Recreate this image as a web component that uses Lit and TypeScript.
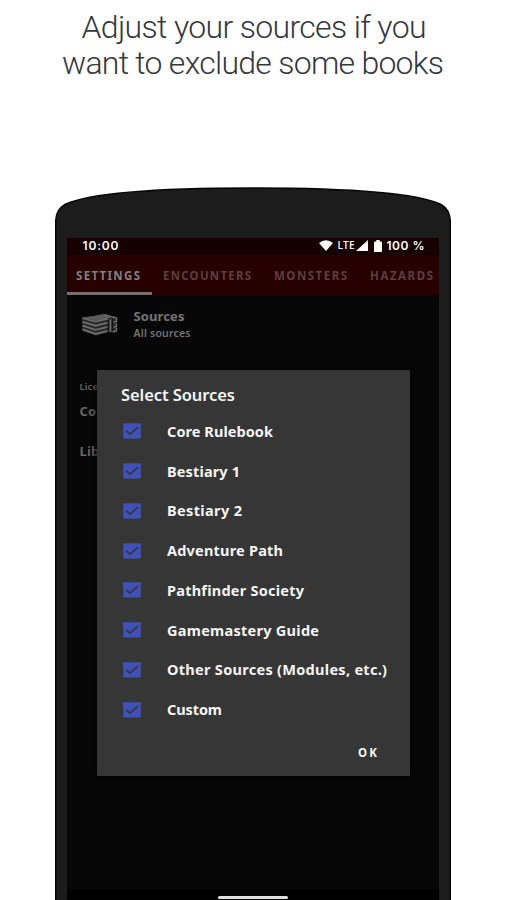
import { LitElement, html, css, svg } from "lit";
import { customElement, property } from "lit/decorators.js";

/** One line of text whose tracking is adjusted so that it spans a given width. */
@customElement("fit-text")
class FitText extends LitElement {
  @property({ type: Number }) span = 0;
  @property() text = "";
  static styles = css`
    :host { display: block; white-space: pre; }
    .line { display: inline-block; }
  `;
  updated() {
    const line = this.renderRoot.querySelector(".line") as HTMLElement;
    line.style.letterSpacing = "0";
    const natural = line.getBoundingClientRect().width;
    const tracking = (this.span - natural) / Math.max(1, this.text.length - 1);
    line.style.letterSpacing = `${tracking}px`;
    line.style.marginRight = `${-tracking}px`;
  }
  render() {
    return html`<span class="line">${this.text}</span>`;
  }
}

const tabs = [
  { label: "SETTINGS", span: 64, cls: "tab active" },
  { label: "ENCOUNTERS", span: 88, cls: "tab" },
  { label: "MONSTERS", span: 73, cls: "tab" },
  { label: "HAZARDS", span: 63, cls: "tab" },
];

const sources = [
  { label: "Core Rulebook", span: 106 },
  { label: "Bestiary 1", span: 73 },
  { label: "Bestiary 2", span: 75 },
  { label: "Adventure Path", span: 116 },
  { label: "Pathfinder Society", span: 137 },
  { label: "Gamemastery Guide", span: 152 },
  { label: "Other Sources (Modules, etc.)", span: 220 },
  { label: "Custom", span: 55 },
];

const check = html`<svg class="box" width="18" height="16" viewBox="0 0 18 16">
  <rect x="0.2" y="0.2" width="17.6" height="15.4" rx="1" fill="#4051b7" />
  <path d="M3.2 7.8 7 11.2 14.8 4.3" fill="none" stroke="#343540" stroke-width="1.7" />
</svg>`;

const bookLayers = [0, 4.1, 8.2, 12.3].map(
  (dy) => svg`<path d="M1.5 ${5.2 + dy * 0.9} 14.5 ${8.6 + dy} 27 ${5.6 + dy}" />`
);

const books = html`<svg class="books" width="38" height="24" viewBox="0 0 38 24">
  <path d="M1 4.6 13 2.8 23 .8 36 4.6V19L27 19.6 15 22.4 1 18Z" fill="#282828" />
  <path d="M2 4.4 13 3 23 1 31 3.4 26 5.6 14.5 7.6Z" fill="#5c5c5c" />
  <g fill="none" stroke="#6c6c6c" stroke-width="1.9">${bookLayers}</g>
  <path d="M27.2 7V19.4M31.5 6V18" stroke="#111" stroke-width="1.1" />
  <path d="M29.4 6.4V19" stroke="#6c6c6c" stroke-width="1.7" />
  <path d="M24 2 35.4 5V8.4L32.5 9.2M35.4 10.6V13.4L32.5 14.2M35.4 15V18L31.5 19" fill="none" stroke="#6c6c6c" stroke-width="1.5" />
</svg>`;

@customElement("app-root")
class AppRoot extends LitElement {
  static styles = css`
    * { box-sizing: border-box; }
    :host {
      display: flex; flex-direction: column; position: relative;
      width: 506px; height: 900px; overflow: hidden; background: #fff;
      font-family: "Noto Sans", sans-serif;
    }
    .headline {
      display: flex; flex-direction: column; align-items: center;
      height: 187px; padding-top: 9px; flex: none;
      font: 300 32px/36px Roboto, sans-serif; color: #36383e;
    }
    .headline .first { padding-left: 2px; }
    .phone { width: 396px; height: 713px; margin-left: 55px; display: grid; }
    .phone > * { grid-area: 1 / 1; }
    .screen {
      margin: 51px 12.5px 0 11.5px; background: #070707;
      display: flex; flex-direction: column; overflow: hidden; z-index: 1;
    }
    .status {
      height: 17px; flex: none; background: #160000; color: #fff;
      display: flex; align-items: center; padding: 0 14px 2px 16px;
      font: 600 12px/15px Inter, sans-serif;
    }
    .clock { margin-right: auto; }
    .wifi { margin-right: 4px; }
    .lte { font: 600 10px/15px "Open Sans", sans-serif; margin-right: 2px; }
    .signal { margin-right: 6px; }
    .battery { margin-right: 4px; }
    .tabs {
      height: 40px; flex: none; background: #270000; display: flex;
      font-weight: 700; font-size: 11.5px; line-height: 41px; color: #5c3f3f;
    }
    .tab { padding: 0 11.5px 0 11.5px; flex: none; height: 40px; }
    .tab.active { padding: 0 11.5px 0 9.5px; color: #858080; border-bottom: 3px solid #777070; }
    .source { display: flex; padding: 13px 0 0 14px; color: #747474; height: 85px; }
    .books { margin: 5px 15px 0 0; }
    .name { font-weight: 700; font-size: 13px; line-height: 17px; }
    .sub { font-weight: 600; font-size: 10.5px; line-height: 17px; }
    .about { padding-left: 13px; color: #666; font-weight: 700; font-size: 13px; line-height: 20px; }
    .about .small { font-weight: 600; font-size: 9.5px; line-height: 14px; margin-bottom: 7px; }
    .about .lib { margin-top: 20px; }
    .nav { margin-top: auto; height: 11px; background: #000; display: flex; justify-content: center; padding-top: 7px; }
    .pill { width: 70px; height: 3px; border-radius: 2px; background: #dedede; }
    .dialog {
      position: absolute; left: 97px; top: 370px; width: 313px; height: 406px; z-index: 2;
      background: #363636; color: #f5f5f5; padding: 13px 0 0 24px; border-radius: 1px;
      box-shadow: 0 2px 8px #000;
    }
    .title { font-weight: 600; font-size: 16.5px; line-height: 24px; height: 28.4px; }
    .row { height: 39.75px; display: flex; align-items: center; padding-left: 2px; font-weight: 700; font-size: 14.5px; line-height: 20px; }
    .row fit-text { padding-bottom: 1px; }
    .box { margin-right: 26px; flex: none; }
    .ok { display: flex; justify-content: flex-end; padding: 13.6px 33px 0 0; font-weight: 700; font-size: 11.5px; line-height: 20px; }
  `;

  render() {
    return html`
      <div class="headline">
        <fit-text class="first" text="Adjust your sources if you" .span=${345}></fit-text>
        <fit-text text="want to exclude some books" .span=${382}></fit-text>
      </div>
      <div class="phone">
        <svg width="396" height="713" viewBox="0 0 396 713">
          <path d="M.7 714V35Q.7 23 10 17.5C28 9 80 1 198 1S368 9 386 17.5Q395.3 23 395.3 35V714"
            fill="#1c1c1c" stroke="#050505" stroke-width="1.5" />
        </svg>
        <div class="screen">
          <div class="status">
            <fit-text class="clock" text="10:00" .span=${36}></fit-text>
            <svg class="wifi" width="14" height="11" viewBox="0 0 14 11"><path d="M0 3Q7-2.5 14 3L7 11Z" fill="#fff" /></svg>
            <fit-text class="lte" text="LTE" .span=${17}></fit-text>
            <svg class="signal" width="12" height="11" viewBox="0 0 12 11"><path d="M12 0V11H0Z" fill="#fff" /></svg>
            <svg class="battery" width="8" height="12" viewBox="0 0 8 12"><path d="M2.3 0H5.7V1.5H7Q8 1.5 8 2.5V11Q8 12 7 12H1Q0 12 0 11V2.5Q0 1.5 1 1.5H2.3Z" fill="#fff" /></svg>
            <fit-text text="100 %" .span=${38}></fit-text>
          </div>
          <div class="tabs">
            ${tabs.map((t) => html`<fit-text class=${t.cls} text=${t.label} .span=${t.span}></fit-text>`)}
          </div>
          <div class="source">
            ${books}
            <div>
              <fit-text class="name" text="Sources" .span=${51}></fit-text>
              <fit-text class="sub" text="All sources" .span=${57}></fit-text>
            </div>
          </div>
          <div class="about">
            <fit-text class="small" text="License" .span=${35}></fit-text>
            <fit-text text="Content" .span=${54}></fit-text>
            <fit-text class="lib" text="Libraries" .span=${58}></fit-text>
          </div>
          <div class="nav"><div class="pill"></div></div>
        </div>
      </div>
      <div class="dialog">
        <fit-text class="title" text="Select Sources" .span=${114}></fit-text>
        ${sources.map((s) => html`<div class="row">${check}<fit-text text=${s.label} .span=${s.span}></fit-text></div>`)}
        <div class="ok"><fit-text text="OK" .span=${19}></fit-text></div>
      </div>
    `;
  }
}
